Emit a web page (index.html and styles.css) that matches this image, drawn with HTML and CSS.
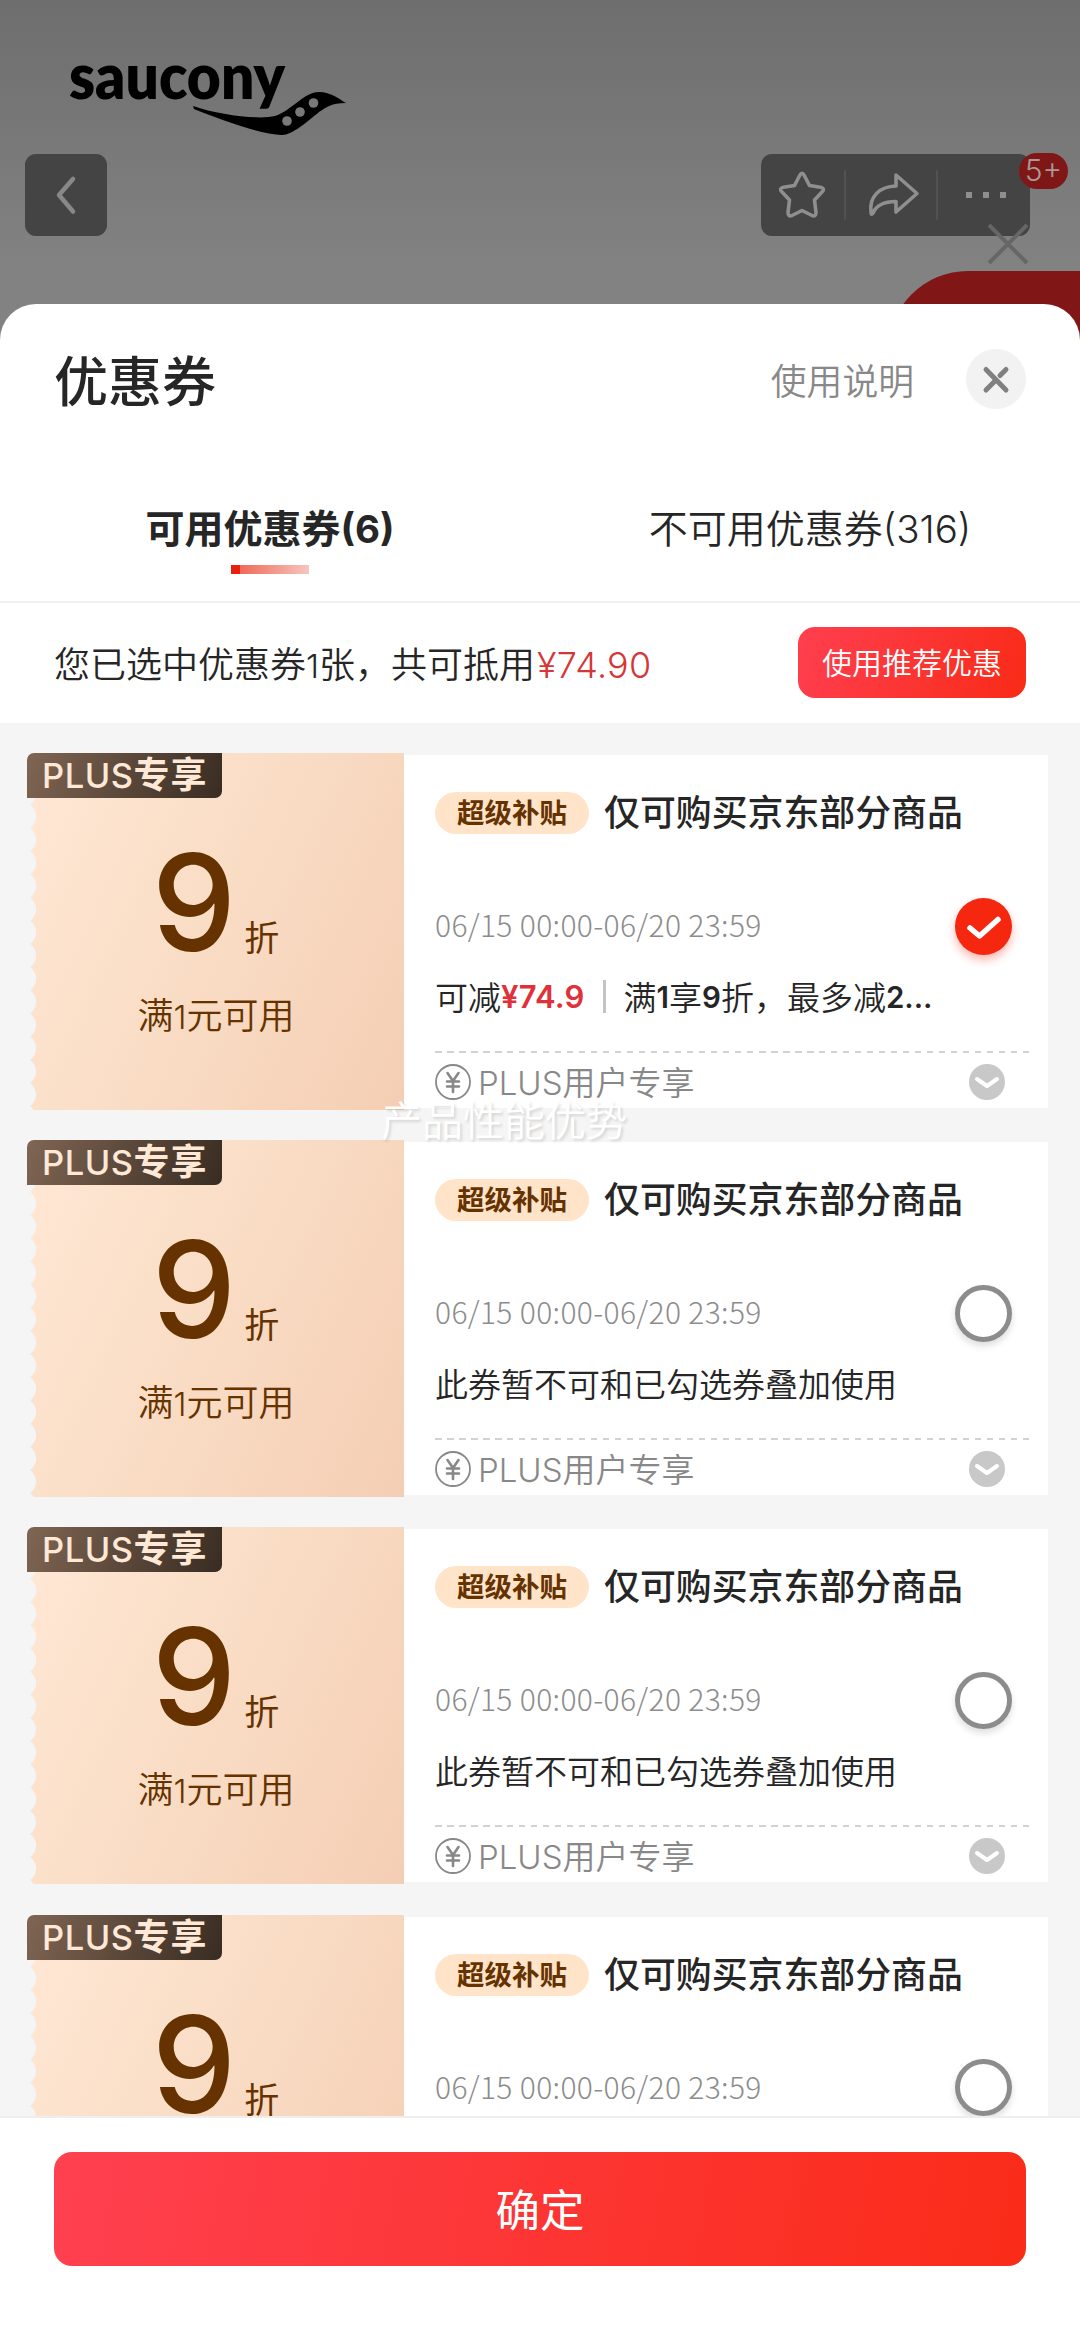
FILE: index.html
```
<!DOCTYPE html>
<html lang="zh-CN">
<head>
<meta charset="utf-8">
<title>优惠券</title>
<link rel="stylesheet" href="styles.css">
</head>
<body>
<div class="screen">
  <header class="backdrop">
    <svg class="logo" viewBox="0 0 290 90" width="290" height="90">
      <text class="logo-text" x="0" y="49" textLength="216" lengthAdjust="spacingAndGlyphs">saucony</text>
      <path class="logo-mark" d="M124 56C150 65 190 70 206 66C222 61 235 42 250 42C262 42 270 49 277 53C262 53 258 57 250 62C238 72 223 85 213 85C190 84 150 69 125 59Z"/>
      <circle class="logo-hole" cx="218" cy="71" r="4.800"/><circle class="logo-hole" cx="231" cy="62" r="4.800"/><circle class="logo-hole" cx="244.500" cy="53" r="4.800"/>
    </svg>
    <nav class="topbar">
      <div class="back">
        <svg viewBox="0 0 82 82" width="82" height="82"><path d="M48 25L34 41L48 57.500"/></svg>
      </div>
      <div class="tools">
        <svg viewBox="0 0 269 82" width="269" height="82">
          <path d="M38.700 21.500Q41 17 43.300 21.500L48.500 31.500L59.500 33.300Q64.500 34.500 61 38L53.500 46L55 58.500Q55 63 51 61.500L41 56.500L31 61.500Q27 63 27 58.500L28.500 46L21 38Q17.500 34.500 22.500 33.300L33.500 31.500Z"/>
          <path d="M135 21L156 39.500L135 58V47.500C121 47.500 115 52 112 59Q110 62 110 58C108 42 119 32.500 135 32Z"/>
          <path class="sep" d="M84 17V65M176 17V65"/>
          <path class="dots" d="M205 41H211M222 41H228M239 41H245"/>
        </svg>
        <span class="badge">5+</span>
      </div>
    </nav>
    <svg class="float-close" viewBox="0 0 44 44" width="44" height="44"><path d="M3 3L41 41M41 3L3 41"/></svg>
    <div class="promo"></div>
  </header>

  <main class="sheet">
    <div class="sheet-head">
      <h1>优惠券</h1>
      <a class="help">使用说明</a>
      <span class="close"><svg viewBox="0 0 60 60" width="60" height="60"><path d="M20 20.500L40 41M40 20.500L34 26.500M28 33L20 41"/></svg></span>
    </div>
    <div class="tabs">
      <div class="tab active"><span>可用优惠券<span class="num">(6)</span></span></div>
      <div class="tab"><span>不可用优惠券<span class="num">(316)</span></span></div>
    </div>
    <div class="summary">
      <p>您已选中优惠券<span class="num">1</span>张，共可抵用<em class="num">¥74.90</em></p>
      <button class="recommend">使用推荐优惠</button>
    </div>

    <div class="list">
      <article class="coupon">
        <div class="value">
          <span class="tag"><b>PLUS</b>专享</span>
          <div class="amount"><strong>9</strong><span>折</span></div>
          <p>满<span class="num">1</span>元可用</p>
        </div>
        <div class="info">
          <h2><span class="pill">超级补贴</span><span class="name">仅可购买京东部分商品</span></h2>
          <div class="when"><time>06/15 00:00-06/20 23:59</time><span class="check on"><svg viewBox="0 0 58 58" width="58" height="58"><path d="M15 30L24.500 38L43 21.500"/></svg></span></div>
          <p class="note">可减<em>¥74.9</em><i class="bar"></i>满<b>1</b>享<b>9</b>折，最多减<b>2</b><b>...</b></p>
          <div class="dash"></div>
          <div class="scope"><svg class="yen" viewBox="0 0 36 36" width="36" height="36"><circle cx="18" cy="18" r="17"/><path d="M12.500 9L18 17L23.500 9M18 17V28M12 17.500H24M12 22.500H24"/></svg><span>PLUS用户专享</span><svg class="more" viewBox="0 0 36 36" width="36" height="36"><circle cx="18" cy="18" r="18"/><path d="M8 15L18 22L28 15"/></svg></div>
        </div>
      </article>
      <article class="coupon">
        <div class="value">
          <span class="tag"><b>PLUS</b>专享</span>
          <div class="amount"><strong>9</strong><span>折</span></div>
          <p>满<span class="num">1</span>元可用</p>
        </div>
        <div class="info">
          <h2><span class="pill">超级补贴</span><span class="name">仅可购买京东部分商品</span></h2>
          <div class="when"><time>06/15 00:00-06/20 23:59</time><span class="check"></span></div>
          <p class="note">此券暂不可和已勾选券叠加使用</p>
          <div class="dash"></div>
          <div class="scope"><svg class="yen" viewBox="0 0 36 36" width="36" height="36"><circle cx="18" cy="18" r="17"/><path d="M12.500 9L18 17L23.500 9M18 17V28M12 17.500H24M12 22.500H24"/></svg><span>PLUS用户专享</span><svg class="more" viewBox="0 0 36 36" width="36" height="36"><circle cx="18" cy="18" r="18"/><path d="M8 15L18 22L28 15"/></svg></div>
        </div>
      </article>
      <article class="coupon">
        <div class="value">
          <span class="tag"><b>PLUS</b>专享</span>
          <div class="amount"><strong>9</strong><span>折</span></div>
          <p>满<span class="num">1</span>元可用</p>
        </div>
        <div class="info">
          <h2><span class="pill">超级补贴</span><span class="name">仅可购买京东部分商品</span></h2>
          <div class="when"><time>06/15 00:00-06/20 23:59</time><span class="check"></span></div>
          <p class="note">此券暂不可和已勾选券叠加使用</p>
          <div class="dash"></div>
          <div class="scope"><svg class="yen" viewBox="0 0 36 36" width="36" height="36"><circle cx="18" cy="18" r="17"/><path d="M12.500 9L18 17L23.500 9M18 17V28M12 17.500H24M12 22.500H24"/></svg><span>PLUS用户专享</span><svg class="more" viewBox="0 0 36 36" width="36" height="36"><circle cx="18" cy="18" r="18"/><path d="M8 15L18 22L28 15"/></svg></div>
        </div>
      </article>
      <article class="coupon">
        <div class="value">
          <span class="tag"><b>PLUS</b>专享</span>
          <div class="amount"><strong>9</strong><span>折</span></div>
        </div>
        <div class="info">
          <h2><span class="pill">超级补贴</span><span class="name">仅可购买京东部分商品</span></h2>
          <div class="when"><time>06/15 00:00-06/20 23:59</time><span class="check"></span></div>
        </div>
      </article>
    </div>
    <div class="toast">产品性能优势</div>

    <footer class="footer"><button class="confirm">确定</button></footer>
  </main>
</div>
</body>
</html>
```
FILE: styles.css
```
* { box-sizing: border-box; }
body, h1, h2, p { margin: 0; }
body { font-family: "Noto Sans CJK SC", sans-serif; color: #262626; background: #fff; }
h1, h2 { font-weight: 500; }
em, i { font-style: normal; }
button { border: 0; padding: 0; font-family: inherit; color: #fff; }
svg { display: block; fill: none; stroke-linecap: round; stroke-linejoin: round; }
.num { font-family: Inter, sans-serif; font-size: .92em; }

.screen { position: relative; width: 1080px; height: 2344px; overflow: hidden; display: flex; flex-direction: column; }

/* dimmed page behind the sheet */
.backdrop { position: relative; flex: 0 0 354px; margin-bottom: -50px; padding-top: 50px; background: linear-gradient(#6e6e6e, #828282 270px); }
.logo { margin-left: 69px; overflow: visible; }
.logo-text { font: 800 62px Lato, sans-serif; fill: #000; }
.logo-mark { fill: #000; }
.logo-hole { fill: #797979; }
.topbar { display: flex; justify-content: space-between; margin-top: 14px; padding: 0 50px 0 25px; }
.back, .tools { height: 82px; border-radius: 11px; background: #444; }
.back path { stroke: #888; stroke-width: 4.500; }
.tools { position: relative; }
.tools path { stroke: #8f8f8f; stroke-width: 3.600; }
.tools .sep { stroke: #525252; stroke-width: 2; }
.tools .dots { stroke: #8f8f8f; stroke-width: 6; stroke-linecap: butt; }
.badge { position: absolute; left: 258px; top: -1px; width: 49px; height: 36px; border-radius: 18px; background: #801717; color: #a99; font: 350 30px/35px Inter, sans-serif; text-align: center; }
.float-close { position: absolute; left: 986px; top: 222px; }
.float-close path { stroke: #666; stroke-width: 4; stroke-linecap: butt; }
.promo { position: absolute; right: 0; top: 271px; width: 192px; height: 83px; border-radius: 80px 0 0 0; background: #801616; }

.sheet { position: relative; flex: 1; display: flex; flex-direction: column; border-radius: 36px 36px 0 0; background: #fff; min-height: 0; }
.sheet-head { display: flex; align-items: center; height: 150px; padding: 0 54px; }
h1 { flex: 1; font-size: 54px; line-height: 60px; }
.help { font-size: 35.800px; color: #888; font-weight: 350; margin-right: 52px; }
.close { width: 60px; height: 60px; border-radius: 50%; background: #f2f2f2; }
.close path { stroke: #808080; stroke-width: 5; }

.tabs { display: flex; height: 149px; border-bottom: 2px solid #f0f0f0; }
.tab { flex: 1; display: flex; flex-direction: column; align-items: center; padding-top: 44px; font-size: 39px; line-height: 56px; font-weight: 350; }
.tab .num { font-size: 38.500px; line-height: 1; }
.tab.active { font-weight: 700; }
.tab.active::after { content: ""; width: 78px; height: 9px; margin-top: 11px; background: linear-gradient(90deg, #e8200f 9px, #ef6a57 9px, #f6c6c0); }

.summary { display: flex; align-items: center; justify-content: space-between; height: 120px; padding: 0 54px 2px; }
.summary p { font-size: 36px; font-weight: 350; }
.summary em { color: #d63636; font-size: 36px; line-height: 1; letter-spacing: .3px; margin-left: 2px; }
.recommend { width: 228px; height: 71px; padding-bottom: 2px; border-radius: 17px; font-size: 30px; font-weight: 350; background: linear-gradient(110deg, #ff3f50, #f92b17); }

.list { flex: 1; min-height: 0; overflow: hidden; display: flex; flex-direction: column; gap: 30.200px; padding: 30px 32px 0 27px; background: #f5f5f5; }
.coupon { flex: 0 0 357px; display: flex; }
.value { width: 377px; display: flex; flex-direction: column; align-items: center; color: #663300; background: radial-gradient(circle at -5.200px 11.600px, #f5f5f5 13.800px, transparent 14.600px) 0 28.600px / 10px 23.200px repeat-y, linear-gradient(115deg, #ffe8d6, #fbe0c9 35%, #f4ceb4); }
.tag { align-self: flex-start; width: 195px; height: 45px; padding-left: 15px; border-radius: 7px 0 7px 0; font-size: 36px; line-height: 39px; letter-spacing: 1px; font-weight: 700; color: #ffe8d6; background: linear-gradient(110deg, #806553, #382c22); white-space: nowrap; }
.tag b { font: 500 34.500px Inter, sans-serif; letter-spacing: .5px; }
.amount { display: flex; align-items: baseline; margin-top: 27px; height: 154px; line-height: 154px; }
.amount strong { font: 500 134px/154px Inter, sans-serif; }
.amount span { font-size: 35px; margin-left: 8px; }
.value p { font-size: 36px; line-height: 50px; margin: 9px 0 0 1px; font-weight: 350; }

.info { width: 644px; margin: 2px 0; padding: 34px 18px 0 31px; background: #fff; display: flex; flex-direction: column; }
h2 { display: flex; align-items: center; gap: 15px; height: 48px; }
.pill { width: 154px; height: 42px; border-radius: 21px; background: #ffe4ca; color: #663300; font-size: 27.500px; line-height: 39px; font-weight: 700; text-align: center; }
.name { font-size: 35.900px; padding-bottom: 6px; }
.when { display: flex; align-items: center; justify-content: space-between; height: 58px; margin-top: 60px; padding-right: 18px; }
time { font-size: 30px; color: #8c8c8c; font-weight: 300; letter-spacing: .35px; padding-bottom: 4px; }
.check { width: 57px; height: 57px; border-radius: 50%; border: 5px solid #8c8c8c; box-shadow: 0 4px 7px #0002; }
.check.on { border: 0; background: #f5270f; box-shadow: 0 5px 10px #f5270f55; }
.check path { stroke: #fff; stroke-width: 5.500; }
.note { display: flex; align-items: center; height: 48px; margin-top: 17px; font-size: 33px; font-weight: 350; white-space: nowrap; }
.note em, .note b { font: 600 29.500px/48px Inter, sans-serif; padding-top: 2px; }
.note em { color: #e0303a; font-size: 31px; letter-spacing: .2px; }
.bar { width: 3px; height: 33px; margin: 0 18px; background: #c4c4c4; }
.dash { height: 2px; margin-top: 31px; background: repeating-linear-gradient(90deg, #d2d2d2 0 6.500px, transparent 6.500px 12px); }
.scope { display: flex; align-items: center; height: 40px; margin-top: 9px; padding-right: 25px; font: 350 33px Inter, "Noto Sans CJK SC", sans-serif; color: #888; }
.scope span { flex: 1; margin-left: 7px; padding-top: 2px; line-height: 38px; }
.yen { stroke: #888; stroke-width: 1.800; }
.yen path { stroke-width: 2.600; }
.more circle { fill: #c8c8c8; }
.more path { stroke: #fff; stroke-width: 4; }

.toast { position: absolute; left: 381px; top: 785px; font-size: 41px; line-height: 58px; font-weight: 350; color: #fff; text-shadow: 2px 2px 3px #0002; white-space: nowrap; }

.footer { flex: 0 0 228px; border-top: 2px solid #eee; padding: 34px 54px 0; background: #fff; }
.confirm { width: 100%; height: 114px; padding-bottom: 3px; border-radius: 18px; font-size: 44.500px; background: linear-gradient(100deg, #ff4050, #fa2b18); }
```
